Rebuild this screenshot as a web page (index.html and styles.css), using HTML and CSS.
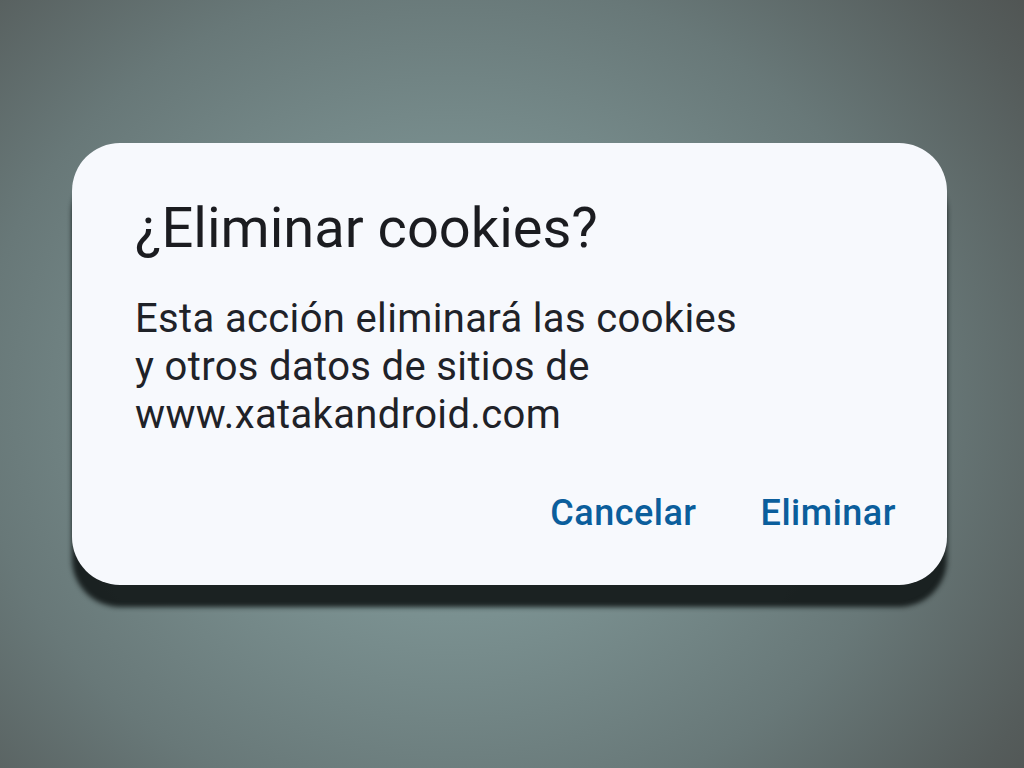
FILE: index.html
```html
<!DOCTYPE html>
<html lang="es">
<head>
<meta charset="utf-8">
<link rel="stylesheet" href="styles.css">
</head>
<body>
<div class="page">
  <div class="dialog">
    <h1 class="title">¿Eliminar cookies?</h1>
    <p class="message">Esta acción eliminará las cookies<br>y otros datos de sitios de<br>www.xatakandroid.com</p>
    <div class="actions">
      <span class="btn">Cancelar</span>
      <span class="btn">Eliminar</span>
    </div>
  </div>
</div>
</body>
</html>
```
FILE: styles.css
```css
html, body {
  margin: 0;
  padding: 0;
  width: 1024px;
  height: 768px;
  overflow: hidden;
}
.page {
  width: 1024px;
  height: 768px;
  box-sizing: border-box;
  padding: 143px 0 0 72px;
  background: radial-gradient(ellipse 80% 95% at 44% 52%, #849c9c 0%, #7a9090 30%, #687878 58%, #555c5b 82%, #4a4b49 100%);
  font-family: Roboto, "Noto Sans", sans-serif;
}
.dialog {
  width: 875px;
  height: 442px;
  box-sizing: border-box;
  background: #f7f9fd;
  border-radius: 48px;
  box-shadow: 0 22px 5px rgba(22, 28, 28, 0.95);
  padding: 53px 51px 0 63px;
  display: flex;
  flex-direction: column;
}
.title {
  margin: 0;
  font-weight: 400;
  font-size: 56px;
  line-height: 64px;
  color: #1b1c20;
}
.message {
  margin: 35px 0 0 0;
  font-size: 40px;
  line-height: 48px;
  letter-spacing: 0.35px;
  color: #1f2228;
}
.actions {
  margin-top: 52px;
  display: flex;
  justify-content: flex-end;
  gap: 64px;
}
.btn {
  font-size: 36px;
  font-weight: 500;
  letter-spacing: 0.5px;
  color: #0b5e9c;
  line-height: 44px;
}
```
